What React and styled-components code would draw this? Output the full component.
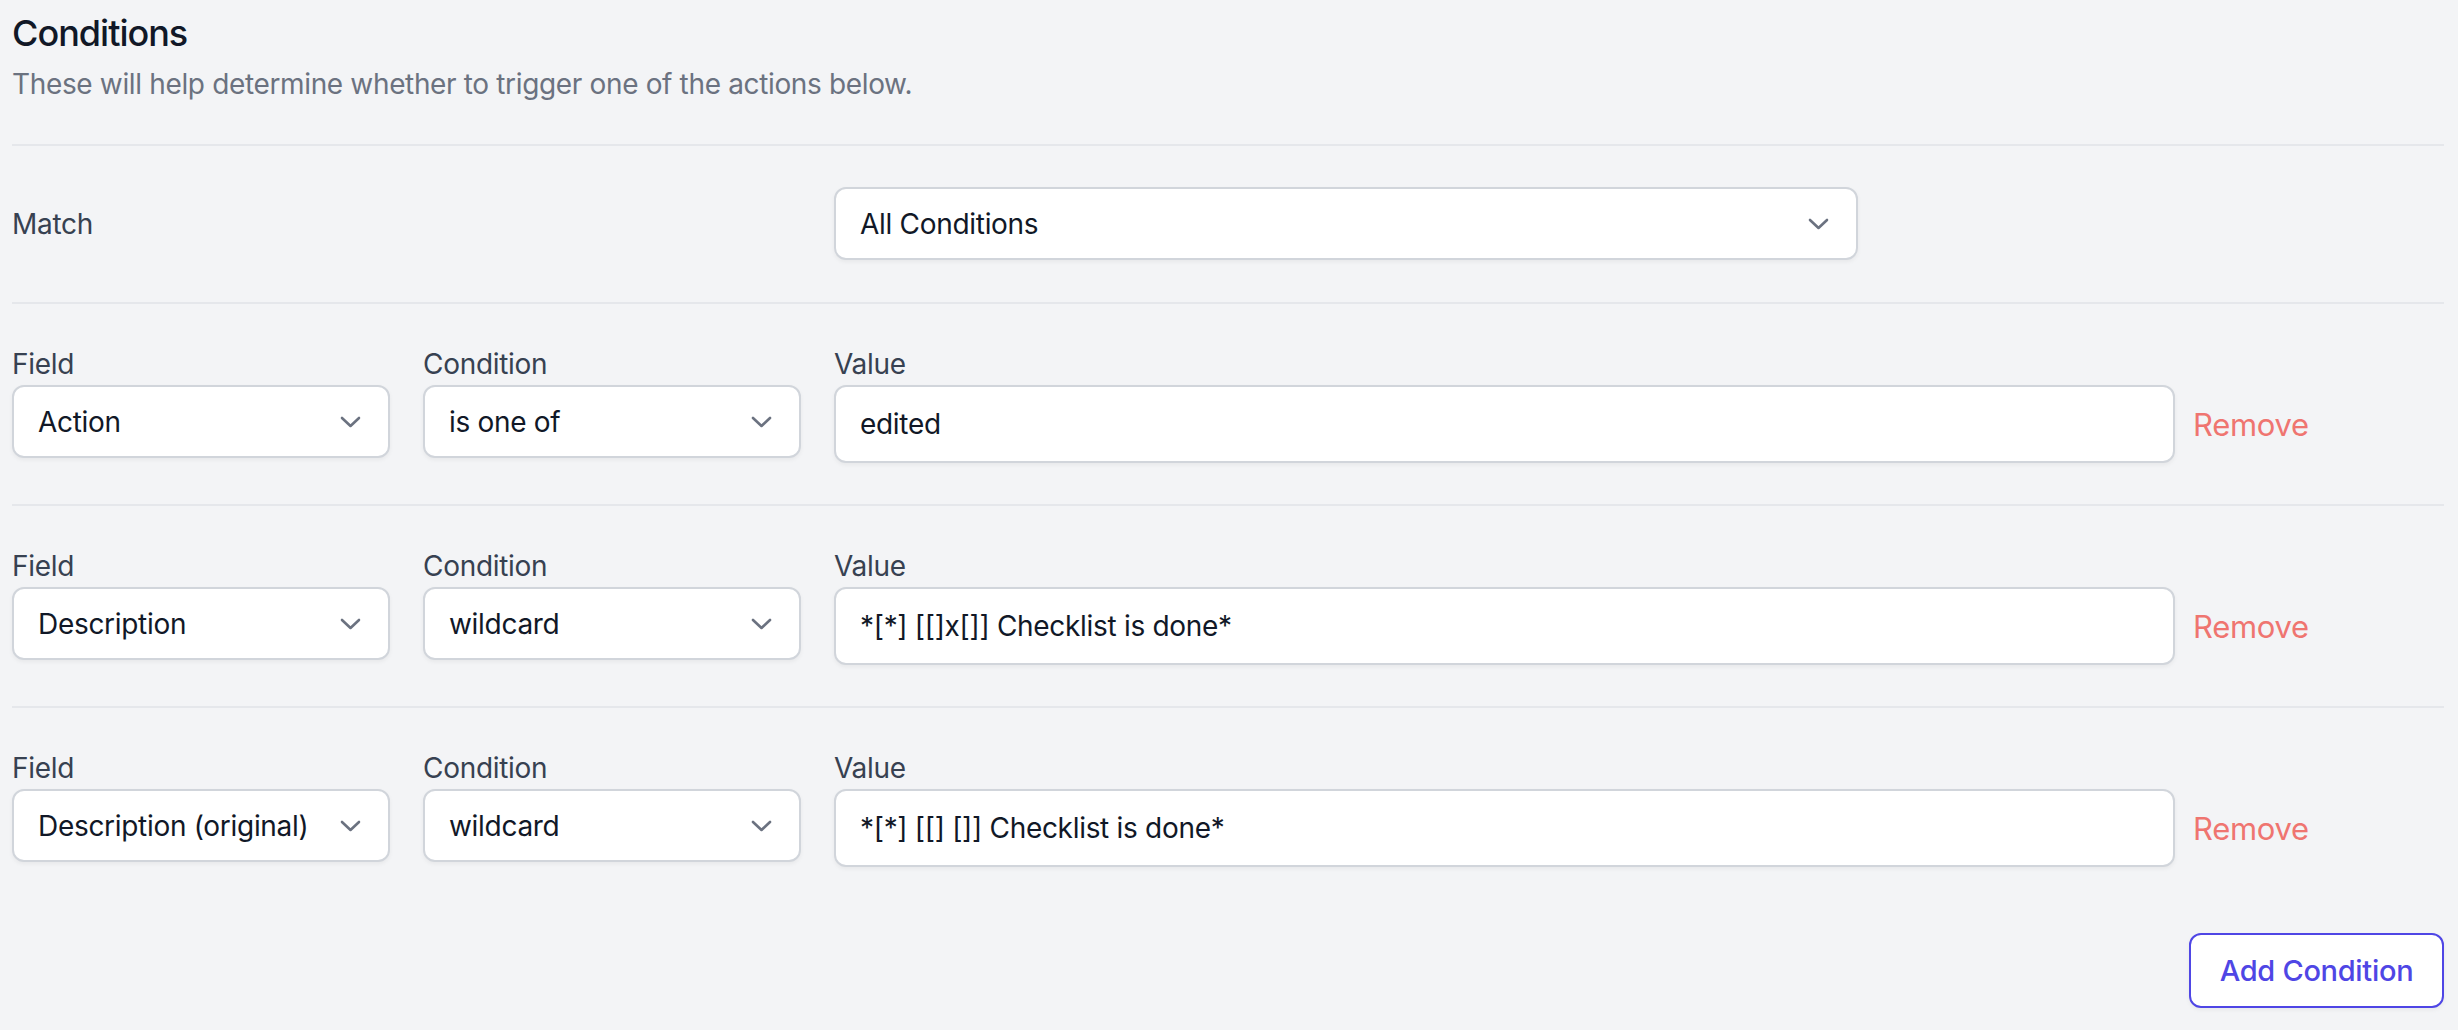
import styled, { createGlobalStyle } from 'styled-components';

const GlobalStyle = createGlobalStyle`
  html, body {
    margin: 0;
    padding: 0;
    background: #f3f4f6;
    font-family: Inter, 'Noto Sans', sans-serif;
    letter-spacing: -0.3px;
    -webkit-font-smoothing: antialiased;
  }
`;

const conditions = [
  { field: 'Action', condition: 'is one of', value: 'edited' },
  { field: 'Description', condition: 'wildcard', value: '*[*] [[]x[]] Checklist is done*' },
  { field: 'Description (original)', condition: 'wildcard', value: '*[*] [[] []] Checklist is done*' },
];

const Chevron = () => (
  <svg width="21" height="12" viewBox="0 0 21 12" fill="none">
    <path
      d="M2 2l8.5 8 8.5-8"
      stroke="#6b7280"
      strokeWidth="2.6"
      strokeLinecap="round"
      strokeLinejoin="round"
    />
  </svg>
);

const Select = ({ value, width }) => (
  <SelectBox $width={width}>
    <span>{value}</span>
    <Chevron />
  </SelectBox>
);

const App = () => {
  return (
    <Page>
      <GlobalStyle />
      <Header>
        <Title>Conditions</Title>
        <Subtitle>These will help determine whether to trigger one of the actions below.</Subtitle>
      </Header>

      <MatchRow>
        <MatchLabel>Match</MatchLabel>
        <Select value="All Conditions" width={1024} />
      </MatchRow>

      {conditions.map((c, i) => (
        <ConditionRow key={i} $last={i === conditions.length - 1}>
          <FieldGroup $width={378}>
            <Label>Field</Label>
            <Select value={c.field} />
          </FieldGroup>
          <FieldGroup $width={378}>
            <Label>Condition</Label>
            <Select value={c.condition} />
          </FieldGroup>
          <FieldGroup>
            <Label>Value</Label>
            <ValueLine>
              <TextInput>{c.value}</TextInput>
              <RemoveButton>Remove</RemoveButton>
            </ValueLine>
          </FieldGroup>
        </ConditionRow>
      ))}

      <Footer>
        <AddButton>Add Condition</AddButton>
      </Footer>
    </Page>
  );
};

export default App;

const Page = styled.div`
  padding: 5px 14px 0 12px;
  min-height: 1025px;
  box-sizing: border-box;
`;

const Header = styled.div`
  padding-bottom: 40px;
  border-bottom: 2px solid #e5e7eb;
`;

const Title = styled.div`
  font-size: 36px;
  line-height: 56px;
  font-weight: 500;
  letter-spacing: -1px;
  color: #111827;
`;

const Subtitle = styled.div`
  margin-top: 3px;
  font-size: 28px;
  line-height: 40px;
  letter-spacing: -0.35px;
  color: #6b7280;
`;

const MatchRow = styled.div`
  display: flex;
  align-items: center;
  gap: 33px;
  padding: 41px 0 42px;
  border-bottom: 2px solid #e5e7eb;
`;

const MatchLabel = styled.div`
  width: 789px;
  font-size: 28px;
  line-height: 40px;
  color: #374151;
`;

const ConditionRow = styled.div`
  display: flex;
  align-items: flex-start;
  gap: 33px;
  padding: 40px 0 41px;
  border-bottom: ${(p) => (p.$last ? 'none' : '2px solid #e5e7eb')};
`;

const FieldGroup = styled.div`
  display: flex;
  flex-direction: column;
  gap: 1px;
  width: ${(p) => (p.$width ? `${p.$width}px` : 'auto')};
  flex: ${(p) => (p.$width ? 'none' : '1')};
`;

const Label = styled.div`
  font-size: 28px;
  line-height: 40px;
  color: #374151;
`;

const SelectBox = styled.div`
  display: flex;
  align-items: center;
  justify-content: space-between;
  box-sizing: border-box;
  width: ${(p) => (p.$width ? `${p.$width}px` : '100%')};
  height: 73px;
  padding: 0 27px 0 24px;
  background: #fff;
  border: 2px solid #d1d5db;
  border-radius: 12px;
  box-shadow: 0 2px 4px rgba(0, 0, 0, 0.05);
  font-size: 28px;
  color: #111827;
  white-space: nowrap;
`;

const ValueLine = styled.div`
  display: flex;
  align-items: center;
  gap: 18px;
`;

const TextInput = styled.div`
  display: flex;
  align-items: center;
  box-sizing: border-box;
  width: 1341px;
  height: 78px;
  padding: 0 24px;
  background: #fff;
  border: 2px solid #d1d5db;
  border-radius: 12px;
  box-shadow: 0 2px 4px rgba(0, 0, 0, 0.05);
  font-size: 28px;
  color: #111827;
  white-space: pre;
`;

const RemoveButton = styled.div`
  font-size: 31px;
  color: #ef7570;
  cursor: pointer;
`;

const Footer = styled.div`
  display: flex;
  justify-content: flex-end;
  padding-top: 25px;
`;

const AddButton = styled.div`
  display: flex;
  align-items: center;
  justify-content: center;
  box-sizing: border-box;
  width: 255px;
  height: 75px;
  background: #fff;
  border: 2px solid #4f46e5;
  border-radius: 12px;
  box-shadow: 0 2px 4px rgba(0, 0, 0, 0.05);
  font-size: 29px;
  font-weight: 500;
  color: #4f46e5;
`;
